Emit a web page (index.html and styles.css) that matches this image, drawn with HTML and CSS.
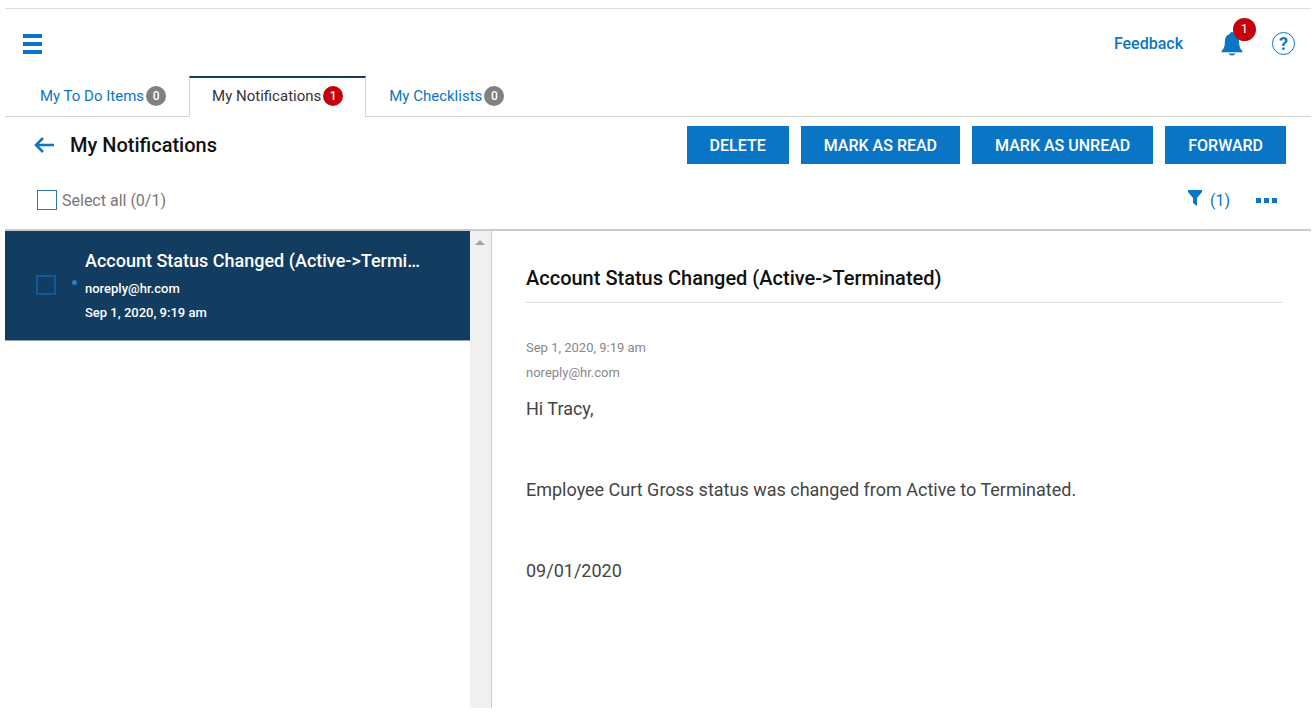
FILE: index.html
```html
<!DOCTYPE html>
<html lang="en">
<head>
    <meta charset="UTF-8">
    <meta name="viewport" content="width=device-width, initial-scale=1.0">
    <title>My Notifications</title>
    <link rel="stylesheet" href="styles.css">
</head>
<body>
    <header class="topbar">
        <button class="icon-btn" type="button" aria-label="Menu">
            <svg width="19" height="20" viewBox="0 0 19 20" fill="#0b75c5"><path d="M0 0h19v4H0zM0 8h19v4H0zM0 16h19v4H0z"/></svg>
        </button>
        <div class="topbar-right">
            <a class="feedback" href="#">Feedback</a>
            <button class="icon-btn bell" type="button" aria-label="Alerts">
                <svg width="22" height="24" viewBox="0 0 22 24" fill="#0b75c5"><path d="M11 0c1.200 0 2 .8 2.100 1.900 3.300.9 5 3.600 5 7.300 0 5.200 1 7.300 3.400 9.800v1.200H.5V19c2.400-2.500 3.400-4.600 3.400-9.800 0-3.700 1.700-6.400 5-7.300C9 .8 9.800 0 11 0z"/><path d="M7.500 21.500h7c-.6 1.300-1.900 1.900-3.500 1.900s-2.900-.6-3.500-1.900z"/></svg>
                <span class="bell-count">1</span>
            </button>
            <button class="help" type="button" aria-label="Help">?</button>
        </div>
    </header>

    <nav class="tabs">
        <a class="tab" href="#">My To Do Items <span class="badge">0</span></a>
        <a class="tab active" href="#">My Notifications <span class="badge red">1</span></a>
        <a class="tab" href="#">My Checklists <span class="badge">0</span></a>
    </nav>

    <div class="titlebar">
        <button class="icon-btn" type="button" aria-label="Back">
            <svg width="20" height="16" viewBox="0 0 20 16" fill="none" stroke="#0b75c5" stroke-width="2.500"><path d="M20 8H2M9 1L2 8l7 7"/></svg>
        </button>
        <h1>My Notifications</h1>
        <div class="actions">
            <button type="button">DELETE</button>
            <button type="button">MARK AS READ</button>
            <button type="button">MARK AS UNREAD</button>
            <button type="button">FORWARD</button>
        </div>
    </div>

    <div class="toolbar">
        <input type="checkbox" id="select-all">
        <label for="select-all">Select all (0/1)</label>
        <button class="icon-btn filter" type="button">
            <svg width="14" height="20" viewBox="0 0 14 20" fill="#0b75c5"><path d="M0 0h14v2L9 8v8l-4-3V8L0 2z"/></svg>
            <span>(1)</span>
        </button>
        <button class="icon-btn" type="button" aria-label="More">
            <svg width="21" height="5" viewBox="0 0 21 5" fill="#0b75c5"><path d="M0 0h5v5H0zM8 0h5v5H8zM16 0h5v5h-5z"/></svg>
        </button>
    </div>

    <main class="content">
        <div class="list">
            <ul>
                <li class="item">
                    <input type="checkbox" aria-label="Select notification">
                    <span class="dot"></span>
                    <div class="item-text">
                        <h2>Account Status Changed (Active-&gt;Termi…</h2>
                        <p>noreply@hr.com</p>
                        <p>Sep 1, 2020, 9:19 am</p>
                    </div>
                </li>
            </ul>
            <div class="scroll">
                <svg width="10" height="5" viewBox="0 0 10 5" fill="#a3a3a3"><path d="M5 0l5 5H0z"/></svg>
            </div>
        </div>
        <article class="detail">
            <h2>Account Status Changed (Active-&gt;Terminated)</h2>
            <p class="meta">Sep 1, 2020, 9:19 am</p>
            <p class="meta">noreply@hr.com</p>
            <div class="message">
                <p>Hi Tracy,</p>
                <p>Employee Curt Gross status was changed from Active to Terminated.</p>
                <p>09/01/2020</p>
            </div>
        </article>
    </main>
</body>
</html>
```

FILE: styles.css
```css
* {
    box-sizing: border-box;
}
body {
    display: flex;
    flex-direction: column;
    height: 100vh;
    margin: 0;
    padding: 8px 1px 7px 5px;
    font-family: Roboto, "Liberation Sans", sans-serif;
    font-size: 16px;
    color: #444;
    background-color: #fff;
}
h1, h2, p, ul {
    margin: 0;
    padding: 0;
    font-weight: 500;
}
a {
    color: #0b75c5;
    text-decoration: none;
}
button {
    font-family: inherit;
    cursor: pointer;
}
svg {
    display: block;
}
.icon-btn {
    display: flex;
    align-items: center;
    padding: 0;
    border: none;
    background: none;
    color: #0b75c5;
    font-size: 16px;
}
input[type="checkbox"] {
    appearance: none;
    flex: none;
    width: 20px;
    height: 20px;
    margin: 0;
    border: 1px solid #2f78b7;
}

/* Header */
.topbar {
    display: flex;
    align-items: center;
    justify-content: space-between;
    height: 68px;
    padding: 2px 16px 0 18px;
    border-top: 1px solid #ddd;
}
.topbar-right {
    display: flex;
    align-items: center;
}
.feedback {
    margin-right: 38px;
    font-size: 16px;
    font-weight: 500;
}
.bell {
    position: relative;
    margin-right: 29px;
}
.bell-count {
    position: absolute;
    top: -14px;
    left: 12px;
    width: 23px;
    height: 23px;
    border-radius: 50%;
    background-color: #c8000a;
    color: #fff;
    font-size: 13px;
    line-height: 22px;
    text-align: center;
}
.help {
    width: 23px;
    height: 23px;
    padding: 0;
    border: 1px solid #0b75c5;
    border-radius: 50%;
    background: none;
    color: #0b75c5;
    font-size: 18px;
    font-weight: 700;
    line-height: 20px;
}

/* Tabs */
.tabs {
    display: flex;
    height: 41px;
    padding-left: 12px;
    box-shadow: inset 0 -1px #d3d3d3;
}
.tab {
    display: flex;
    align-items: center;
    gap: 2px;
    padding: 0 22px 3px;
    border: 1px solid transparent;
    border-top-width: 2px;
    border-bottom: none;
    font-size: 15px;
}
.tab.active {
    border-color: #123d60 #d3d3d3;
    background-color: #fff;
    color: #333;
}
.badge {
    width: 20px;
    height: 20px;
    border-radius: 50%;
    background-color: #808080;
    color: #fff;
    font-size: 12px;
    font-weight: 500;
    line-height: 20px;
    text-align: center;
}
.badge.red {
    background-color: #c8000a;
}

/* Title and buttons */
.titlebar {
    display: flex;
    align-items: center;
    height: 56px;
    padding: 0 25px 0 29px;
}
h1 {
    margin-left: 16px;
    font-size: 20px;
    color: #111;
}
.actions {
    display: flex;
    gap: 12px;
    margin-left: auto;
}
.actions button {
    height: 38px;
    padding: 0 23px;
    border: none;
    background-color: #0b75c5;
    color: #fff;
    font-size: 16px;
    font-weight: 500;
}
.toolbar {
    display: flex;
    align-items: center;
    height: 58px;
    padding: 0 34px 2px 32px;
    border-bottom: 2px solid #c8ccd0;
}
.toolbar label {
    margin-left: 5px;
    color: #777;
}
.filter {
    gap: 8px;
    margin: 0 26px 0 auto;
}

/* List and message */
.content {
    display: flex;
    flex: 1;
    min-height: 0;
}
.list {
    display: flex;
    flex: none;
    width: 487px;
    border-right: 1px solid #ccc;
}
.list ul {
    flex: 1;
    min-width: 0;
    list-style-type: none;
}
.item {
    display: flex;
    align-items: center;
    height: 110px;
    padding: 0 40px 2px 31px;
    border-bottom: 1px solid #8fa3b5;
    background-color: #123d60;
    color: #fff;
}
.item input[type="checkbox"] {
    border: 2px solid #0d5a9e;
}
.dot {
    flex: none;
    width: 5px;
    height: 5px;
    margin: 0 8px 4px 16px;
    border-radius: 50%;
    background-color: #1f84c6;
}
.item-text {
    min-width: 0;
}
.item h2 {
    font-size: 18px;
    line-height: 32px;
    white-space: nowrap;
}
.item p {
    font-size: 13px;
    line-height: 24px;
}
.scroll {
    width: 21px;
    padding: 9px 5px;
    background-color: #f0f0f0;
}
.detail {
    flex: 1;
    padding: 27px 29px 0 34px;
}
.detail h2 {
    margin-bottom: 32px;
    padding-bottom: 4px;
    border-bottom: 1px solid #ddd;
    font-size: 20px;
    line-height: 40px;
    color: #111;
}
.meta {
    font-size: 13px;
    font-weight: 400;
    line-height: 25px;
    color: #888;
}
.message {
    padding-top: 10px;
}
.message p {
    margin-bottom: 54px;
    font-size: 18px;
    font-weight: 400;
    line-height: 27px;
}
```
